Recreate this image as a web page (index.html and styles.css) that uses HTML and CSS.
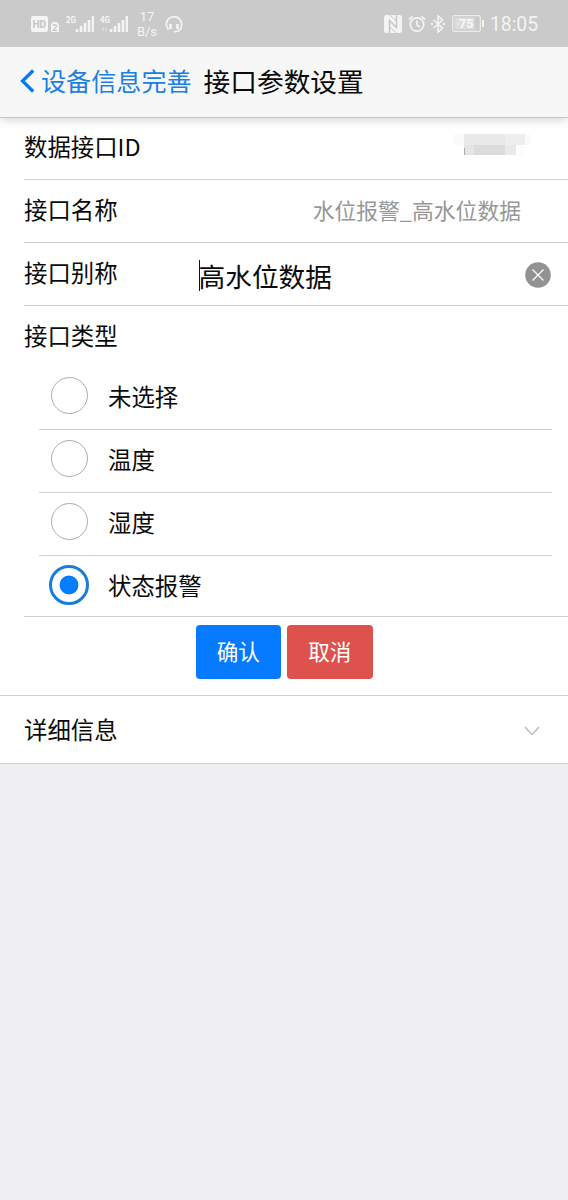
FILE: index.html
```html
<!DOCTYPE html>
<html lang="zh-CN">
<head>
<meta charset="utf-8">
<title>接口参数设置</title>
<link rel="stylesheet" href="styles.css">
</head>
<body>
<div class="status">
  <svg class="ic-hd" width="28" height="16" viewBox="0 0 28 16"><rect width="17" height="16" rx="2" fill="#f4f4f4"/><path d="M20 16V9a3 3 0 0 1 3-3h1a4 4 0 0 1 4 4v6z" fill="#f4f4f4"/><text x="1.5" y="12" class="hd-text">HD</text><text x="21.300" y="14.500" class="hd-num">2</text></svg>
  <svg class="ic-sig1" width="28" height="18" viewBox="0 0 28 18"><text x="0" y="8" class="net" textLength="10" lengthAdjust="spacingAndGlyphs">2G</text><path d="M11 14v3M15 11v6M19 8v9M23 5v12M27 1v16" class="bars"/></svg>
  <svg class="ic-sig2" width="28" height="18" viewBox="0 0 28 18"><text x="0" y="8" class="net" textLength="10" lengthAdjust="spacingAndGlyphs">4G</text><path d="M3 12v4M6 12v4" class="updown"/><path d="M11 14v3M15 11v6M19 8v9M23 5v12M27 1v16" class="bars"/></svg>
  <div class="speed"><span>17</span><span>B/s</span></div>
  <svg class="ic-head" width="18" height="18" viewBox="0 0 18 18"><path d="M3.500 14.500A7.600 7.600 0 1 1 16.500 10.500Q16.500 16.500 9 16.800" fill="none" stroke="#f4f4f4" stroke-width="1.700"/><path d="M5.500 9v5M12.500 9v5" stroke="#f4f4f4" stroke-width="2.600"/></svg>
  <div class="right">
    <svg width="18" height="18" viewBox="0 0 18 18"><rect x="0" y="0" width="18" height="18" rx="2.500" fill="#f4f4f4"/><path d="M5.500 18V5.500L12.500 12.500V0" fill="none" stroke="#c4c4c4" stroke-width="1.400"/><path d="M5.500 0L12.500 6M5.500 12L12.500 18" stroke="#c4c4c4" stroke-width="1"/></svg>
    <svg width="18" height="18" viewBox="0 0 18 18" fill="none" stroke="#f4f4f4" stroke-width="1.700"><circle cx="9" cy="9.500" r="6.700"/><path d="M9 5.500v4.500l3 2M1 4.500l3.500-3M17 4.500l-3.500-3"/></svg>
    <svg width="14" height="18" viewBox="0 0 14 18"><path d="M2.500 5l9 8L7 17V1l4.500 4-9 8" fill="none" stroke="#f4f4f4" stroke-width="1.600"/><path d="M0 9h2M12 9h2" stroke="#f4f4f4" stroke-width="2"/></svg>
    <svg class="ic-bat" width="33" height="17" viewBox="0 0 33 17"><rect x=".7" y=".7" width="27.600" height="15.600" rx="1.500" fill="none" stroke="#ececec" stroke-width="1.200"/><rect x="2.500" y="2.500" width="20" height="12" fill="#dcdcdc"/><path d="M31 5v7" stroke="#f4f4f4" stroke-width="2"/><text x="7" y="13" class="bat">75</text></svg>
    <span class="clock">18:05</span>
  </div>
</div>
<header class="nav">
  <svg class="back-icon" width="15" height="24" viewBox="0 0 15 24"><path d="M13.200 1.500L2.500 12L13.200 22.500" fill="none" stroke="#0879ef" stroke-width="3.300"/></svg>
  <a class="back">设备信息完善</a>
  <h1 class="title">接口参数设置</h1>
</header>
<main class="form">
  <div class="row first"><span class="label">数据接口ID</span>
    <svg class="masked" width="76" height="26" viewBox="0 0 76 26" shape-rendering="crispEdges"><path d="M0 0h76v11H0z" fill="#fafafa"/><path d="M10 0h41v11H10z" fill="#e9e9e9"/><path d="M51 0h20v11H51z" fill="#eee"/><path d="M10 11h10v10H10z" fill="#e5e5e5"/><path d="M20 11h31v10H20z" fill="#dcdcdc"/><path d="M51 11h11v10H51z" fill="#e9e9e9"/><path d="M62 11h8v11h-8z" fill="#fcfcfc"/><path d="M10 14h1v7h-1z" fill="#aaa"/></svg>
  </div>
  <div class="row"><span class="label">接口名称</span><span class="value">水位报警_高水位数据</span></div>
  <div class="row"><span class="label">接口别称</span>
    <span class="input"><i class="caret"></i>高水位数据</span>
    <svg class="clear" width="26" height="26" viewBox="0 0 26 26"><circle cx="13" cy="13" r="12.800" fill="#929292"/><path d="M7.500 7.500l11 11M18.500 7.500l-11 11" stroke="#fff" stroke-width="1.300"/></svg>
  </div>
  <div class="row heading"><span class="label">接口类型</span></div>
  <div class="radios">
    <div class="radio"><i class="dot"></i><span class="label">未选择</span></div>
    <div class="radio"><i class="dot"></i><span class="label">温度</span></div>
    <div class="radio"><i class="dot"></i><span class="label">湿度</span></div>
    <div class="radio last"><i class="dot on"></i><span class="label">状态报警</span></div>
  </div>
  <div class="actions"><button class="btn ok">确认</button><button class="btn cancel">取消</button></div>
  <div class="detail"><span class="label">详细信息</span><svg class="chev" width="16" height="10" viewBox="0 0 16 10"><path d="M1 1l7 7.500L15 1" fill="none" stroke="#bdbdbd" stroke-width="1.500"/></svg></div>
</main>
</body>
</html>
```

FILE: styles.css
```css
* { box-sizing: border-box; }
body {
  margin: 0;
  min-height: 1200px;
  background: #eeeef3;
  color: #0a0a0a;
  font-family: "Noto Sans CJK SC", sans-serif;
}
svg { display: block; flex: none; }

.status {
  position: relative;
  z-index: 2;
  height: 47px;
  background: #cacaca;
  color: #f4f4f4;
  display: flex;
  align-items: center;
  padding: 0 31px;
  font-family: Roboto, sans-serif;
}
.status text { font-family: Roboto, sans-serif; }
.hd-text { font-size: 10px; font-weight: 700; fill: #c4c4c4; }
.hd-num { font-size: 9px; font-weight: 700; fill: #c4c4c4; }
.net { font-size: 9.5px; font-weight: 700; fill: #f4f4f4; }
.bars { stroke: #f4f4f4; stroke-width: 2.6; }
.updown { stroke: #dedede; stroke-width: 1.5; }
.ic-sig1 { margin-left: 7px; }
.ic-sig2 { margin-left: 6px; }
.speed {
  width: 26px;
  margin: 0 5px 0 6px;
  display: flex;
  flex-direction: column;
  align-items: center;
  font-size: 13px;
  line-height: 15px;
}
.right { margin-left: auto; display: flex; align-items: center; }
.right svg { margin-right: 5px; }
.right svg:first-child { margin-right: 6px; }
.right svg.ic-bat { margin: 0 5px 0 2px; }
.bat { font-size: 12.5px; font-weight: 700; fill: #f8f8f8; }
.clock { font-size: 19.3px; line-height: 24px; padding-top: 2px; width: 47px; white-space: nowrap; }

.nav {
  position: relative;
  z-index: 1;
  height: 71px;
  display: flex;
  align-items: center;
  padding: 0 0 2px 20px;
  background: #f7f7f7;
  border-bottom: 1px solid #c6c6c6;
  box-shadow: 0 1px 10px rgba(0, 0, 0, .2);
}
.back { margin-left: 6px; padding-bottom: 2px; font-size: 25.1px; color: #1b7fe3; }
.title { margin: 0 0 0 12px; padding-bottom: 2px; font-size: 26.7px; font-weight: 400; }

.form { background: #fff; }
.label { font-size: 23.4px; line-height: 34px; padding-bottom: 2px; }
.row {
  height: 63px;
  margin-left: 24px;
  display: flex;
  align-items: center;
  padding-bottom: 2px;
  border-bottom: 1px solid #cfcfd1;
}
.row.first { height: 62px; padding-bottom: 4px; }
.row.heading { height: 61px; border: 0; padding-bottom: 1px; }
.masked { margin: 0 38px 0 auto; }
.value { margin: 0 47px 0 auto; padding-bottom: 2px; font-size: 21.8px; color: #979797; }
.input { margin-left: 81px; padding-top: 5px; font-size: 26.7px; line-height: 34px; display: flex; align-items: center; }
.caret { width: 1.5px; height: 31px; margin-right: -1.5px; background: #111; }
.clear { margin: 3px 17px 0 auto; }

.radio {
  height: 63px;
  margin: 0 16px 0 39px;
  display: flex;
  align-items: center;
  padding: 0 0 5px 12px;
  border-bottom: 1px solid #cfcfd1;
}
.radio .label { padding-bottom: 0; }
.radio.last { height: 61px; margin: 0 0 0 24px; padding: 0 0 2px 25px; }
.dot {
  width: 37px;
  height: 37px;
  margin-right: 20px;
  border: 1.5px solid #acacac;
  border-radius: 50%;
}
.dot.on {
  width: 40px;
  height: 40px;
  margin-right: 19px;
  border: 3px solid #1b7ce0;
  background: radial-gradient(circle, #067cff 9px, transparent 9.8px);
}

.actions {
  height: 79px;
  display: flex;
  justify-content: center;
  gap: 6px;
  padding-top: 8px;
  border-bottom: 1px solid #cfcfd1;
}
.btn {
  width: 85.5px;
  height: 54px;
  padding: 0 0 4px;
  border: 0;
  border-radius: 4px;
  color: #fff;
  font: 21.6px "Noto Sans CJK SC", sans-serif;
}
.ok { background: #067bff; }
.cancel { background: #dd524d; }
.detail {
  height: 68px;
  display: flex;
  align-items: center;
  justify-content: space-between;
  padding: 0 28px 0 24px;
  border-bottom: 1px solid #cfcfd4;
}
.chev { margin-top: 3px; }
```
